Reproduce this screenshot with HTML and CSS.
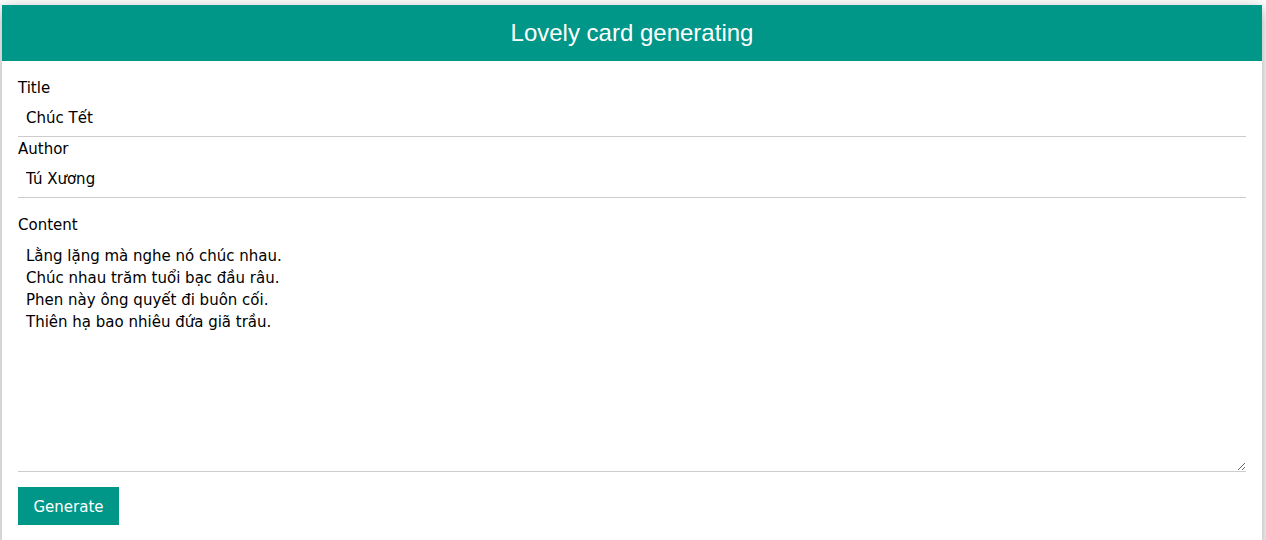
FILE: index.html
```html
<!DOCTYPE html>
<html lang="vi">
<head>
<meta charset="utf-8">
<title>Lovely card generating</title>
<link rel="stylesheet" href="styles.css">
</head>
<body>
<div class="card">
  <header class="card-header">
    <h3 class="card-title">Lovely card generating</h3>
  </header>
  <form class="card-form">
    <div class="group">
      <label class="field-label">Title</label>
      <input class="field-input" type="text" value="Chúc Tết">
      <label class="field-label">Author</label>
      <input class="field-input" type="text" value="Tú Xương">
    </div>
    <div class="group">
      <label class="field-label">Content</label>
      <textarea class="field-area">Lằng lặng mà nghe nó chúc nhau.
Chúc nhau trăm tuổi bạc đầu râu.
Phen này ông quyết đi buôn cối.
Thiên hạ bao nhiêu đứa giã trầu.</textarea>
    </div>
    <div class="group">
      <button class="btn" type="button">Generate</button>
    </div>
  </form>
</div>
</body>
</html>
```

FILE: styles.css
```css
html, body {
  margin: 0;
  padding: 0;
  background: #fff;
}
body {
  padding: 5px 4px 0 2px;
  font-family: "DejaVu Sans", Verdana, sans-serif;
  font-size: 15px;
  line-height: 22px;
  color: #000;
}
.card {
  background: #fff;
  box-shadow: 0 4px 10px 0 rgba(0,0,0,0.2), 0 4px 20px 0 rgba(0,0,0,0.19);
  min-height: 560px;
}
.card-header {
  background: #009688;
  color: #fff;
  padding: 0 16px;
  text-align: center;
}
.card-title {
  margin: 0;
  padding: 10px 0;
  font-family: "Liberation Sans", Arial, sans-serif;
  font-weight: 400;
  font-size: 24px;
  line-height: 36px;
}
.card-form {
  padding: 0 16px;
}
.group {
  padding-top: 15px;
}
.field-label {
  display: block;
  padding-top: 2px;
  line-height: 20px;
}
.field-input,
.field-area {
  display: block;
  width: 100%;
  box-sizing: border-box;
  padding: 9px 8px 7px;
  border: none;
  border-bottom: 1px solid #ccc;
  font-family: "DejaVu Sans", Verdana, sans-serif;
  font-size: 15px;
  line-height: 22px;
  color: #000;
  background: #fff;
  margin: 0;
  outline: none;
}
.field-input {
  height: 39px;
}
.field-area {
  height: 237px;
  padding-top: 10px;
  resize: vertical;
}
.btn {
  display: inline-block;
  background: #009688;
  color: #fff;
  border: none;
  padding: 9px 15.5px 7px;
  font-family: "DejaVu Sans", Verdana, sans-serif;
  font-size: 15px;
  line-height: 22px;
  margin: 0;
  cursor: pointer;
}
```
